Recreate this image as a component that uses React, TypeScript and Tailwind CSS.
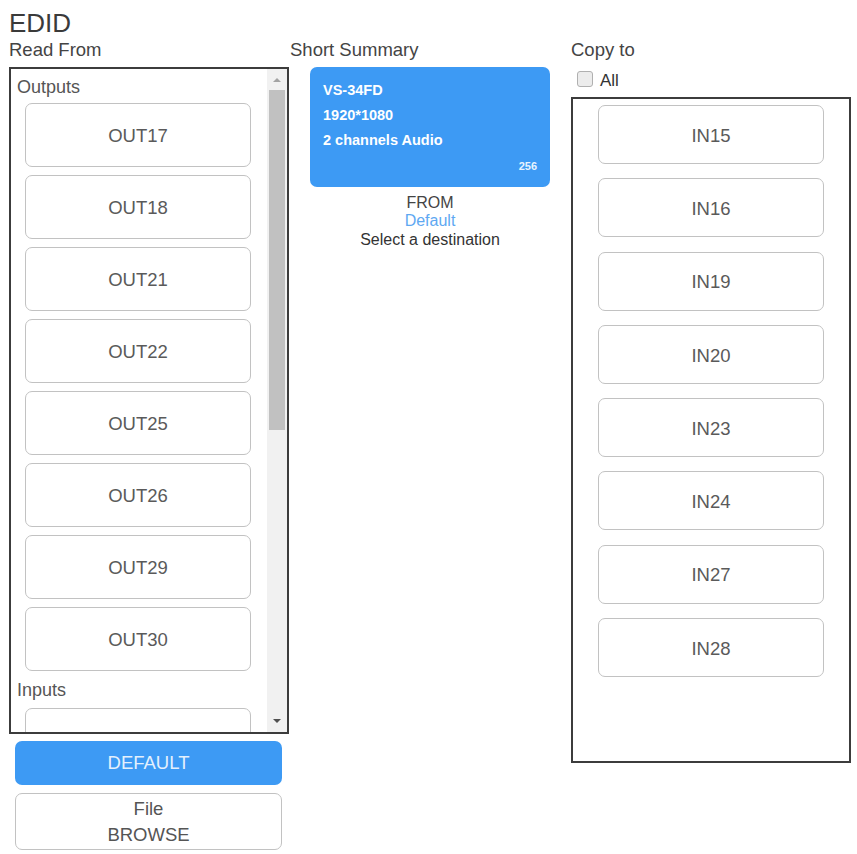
import React from 'react'

const outputs = ['OUT17', 'OUT18', 'OUT21', 'OUT22', 'OUT25', 'OUT26', 'OUT29', 'OUT30']
const inputs = ['IN15', 'IN16', 'IN19', 'IN20', 'IN23', 'IN24', 'IN27', 'IN28']

function PortButton({ label, className }: { label: string; className: string }) {
  return (
    <div
      className={`flex shrink-0 items-center justify-center rounded-[7px] border-[1.5px] border-[#c2c2c2] bg-white pt-[2px] text-[18.5px] text-[#5a5a5a] ${className}`}
    >
      {label}
    </div>
  )
}

function Scrollbar() {
  return (
    <div className="flex w-[20px] shrink-0 flex-col bg-[#f1f1f1]">
      <div className="flex h-[21px] items-center justify-center">
        <div className="h-0 w-0 border-x-[4px] border-b-[4px] border-x-transparent border-b-[#a3a3a3]" />
      </div>
      <div className="mx-[2px] h-[340px] bg-[#c1c1c1]" />
      <div className="flex-1" />
      <div className="flex h-[22px] items-center justify-center">
        <div className="h-0 w-0 border-x-[4px] border-t-[4px] border-x-transparent border-t-[#505050]" />
      </div>
    </div>
  )
}

export default function App() {
  return (
    <div
      className="h-[854px] w-[857px] overflow-hidden bg-white pl-[9px] text-[#333]"
      style={{ fontFamily: '"Liberation Sans", Arial, sans-serif' }}
    >
      <div className="pt-[8px] text-[26px] leading-[30px] text-[#3a3a3a]">EDID</div>

      <div className="flex">
        {/* Read From */}
        <div className="w-[281px] shrink-0">
          <div className="mt-[2px] text-[18.5px] leading-[20px] text-[#444]">Read From</div>
          <div className="mt-[7px] flex h-[667px] w-[280px] overflow-hidden border-2 border-[#3c3c3c]">
            <div className="flex flex-1 flex-col overflow-hidden pt-[6px]">
              <div className="pl-[6px] text-[18px] leading-[24px] text-[#555]">Outputs</div>
              <div className="mt-[4px] flex flex-col gap-[8px] pl-[14px]">
                {outputs.map((o) => (
                  <PortButton key={o} label={o} className="h-[64px] w-[226px]" />
                ))}
              </div>
              <div className="mt-[7px] pl-[6px] text-[18px] leading-[24px] text-[#555]">Inputs</div>
              <div className="mt-[6px] pl-[14px]">
                <PortButton label="" className="h-[64px] w-[226px]" />
              </div>
            </div>
            <Scrollbar />
          </div>
          <div className="ml-[6px] mt-[7px] flex w-[267px] flex-col gap-[8px]">
            <button className="h-[44px] rounded-[7px] bg-[#3d9af4] text-[18.5px] text-[#e3f0fd]">
              DEFAULT
            </button>
            <button className="flex h-[57px] flex-col items-center justify-center rounded-[7px] border-[1.5px] border-[#c2c2c2] bg-white text-[18.5px] leading-[26px] text-[#555]">
              <span>File</span>
              <span>BROWSE</span>
            </button>
          </div>
        </div>

        {/* Short Summary */}
        <div className="w-[281px] shrink-0">
          <div className="mt-[2px] text-[18.5px] leading-[20px] text-[#444]">Short Summary</div>
          <div className="ml-[20px] mt-[7px] h-[120px] w-[240px] rounded-[7px] bg-[#3d9af4] px-[13px] pt-[11px] font-bold text-white">
            <div className="text-[14.5px] leading-[25px]">VS-34FD</div>
            <div className="text-[14.5px] leading-[25px]">1920*1080</div>
            <div className="text-[14.5px] leading-[25px]">2 channels Audio</div>
            <div className="mt-[6px] text-right text-[11px] leading-[14px] text-[#e8f3fe]">256</div>
          </div>
          <div className="ml-[20px] mt-[6.5px] w-[240px] text-center text-[16px] leading-[18.5px]">
            <div className="text-[#444]">FROM</div>
            <div className="text-[#5ea8f2]">Default</div>
            <div className="text-[#333]">Select a destination</div>
          </div>
        </div>

        {/* Copy to */}
        <div className="w-[280px] shrink-0">
          <div className="mt-[2px] text-[18.5px] leading-[20px] text-[#444]">Copy to</div>
          <label className="mt-[8px] flex h-[22px] items-center pl-[6px]">
            <span className="h-[16px] w-[16px] rounded-[3px] border border-[#b0b0b0] bg-[#ececec]" />
            <span className="ml-[7px] pt-[3px] text-[17px] text-[#333]">All</span>
          </label>
          <div className="mt-[7px] flex h-[666px] w-[280px] flex-col gap-[14.3px] border-2 border-[#3c3c3c] pl-[25px] pt-[6px]">
            {inputs.map((i) => (
              <PortButton key={i} label={i} className="h-[59px] w-[226px]" />
            ))}
          </div>
        </div>
      </div>
    </div>
  )
}
